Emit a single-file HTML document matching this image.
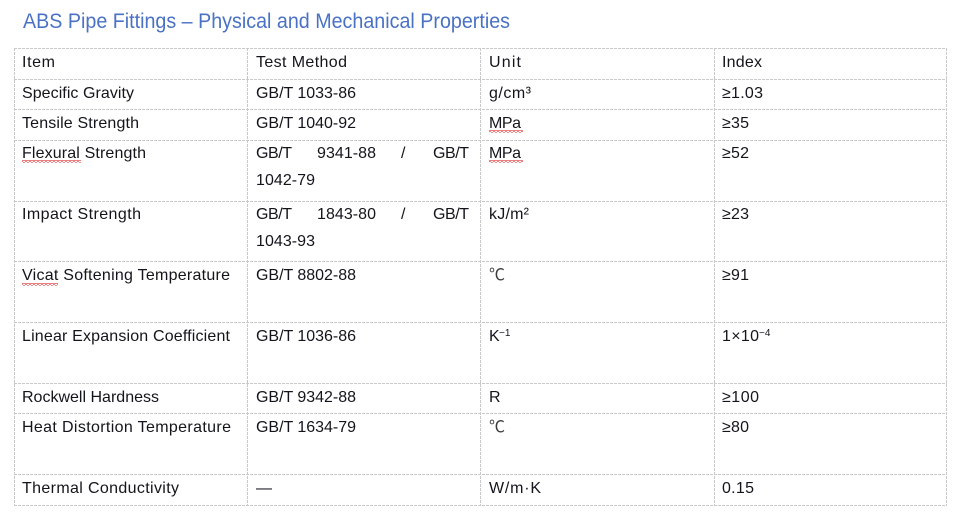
<!DOCTYPE html>
<html lang="en">
<head>
<meta charset="utf-8">
<title>ABS Pipe Fittings</title>
<style>
html,body{margin:0;padding:0;background:#fff;width:964px;height:518px;overflow:hidden}
svg{display:block}
text{font-family:"Liberation Sans",sans-serif;font-size:16px;fill:#14141c}
.t{font-size:21.500px;fill:#4a72c4}
.c{font-family:"Noto Sans CJK JP",sans-serif;font-size:16px;fill:#3c3c3c}
.u{font-size:10px}
.g{stroke:#c9c9c9;stroke-width:1;stroke-dasharray:3 1;fill:none}
</style>
</head>
<body>
<svg width="964" height="518" viewBox="0 0 964 518" xmlns="http://www.w3.org/2000/svg">
<defs>
<pattern id="w" x="0" y="0" width="4" height="3" patternUnits="userSpaceOnUse">
<path d="M0 .5L2 2.500L4 .5" fill="none" stroke="#e24a4a" stroke-width="1"/>
</pattern>
</defs>
<text class="t" x="23" y="28" textLength="487" lengthAdjust="spacingAndGlyphs">ABS Pipe Fittings – Physical and Mechanical Properties</text>

<path class="g" d="M14 48.500H947M14 79.500H947M14 109.500H947M14 140.500H947M14 201.500H947M14 261.500H947M14 322.500H947M14 383.500H947M14 413.500H947M14 474.500H947M14 505.500H947"/>
<path class="g" d="M14.500 48V506M247.500 48V506M480.500 48V506M714.500 48V506M946.500 48V506"/>

<text x="22" y="67" textLength="33">Item</text>
<text x="256" y="67" textLength="91">Test Method</text>
<text x="489" y="67" textLength="32">Unit</text>
<text x="722" y="67" textLength="40">Index</text>

<text x="22" y="98" textLength="112">Specific Gravity</text>
<text x="256" y="98" textLength="100">GB/T 1033-86</text>
<text x="489" y="98" textLength="42">g/cm³</text>
<text x="722" y="98" textLength="41">≥1.03</text>

<text x="22" y="128" textLength="117">Tensile Strength</text>
<text x="256" y="128" textLength="100">GB/T 1040-92</text>
<text x="489" y="128" textLength="32">MPa</text>
<text x="722" y="128" textLength="27">≥35</text>

<text x="22" y="158" textLength="124">Flexural Strength</text>
<text x="256" y="158" textLength="36">GB/T</text>
<text x="317" y="158" textLength="59">9341-88</text>
<text x="401" y="158">/</text>
<text x="433" y="158" textLength="36">GB/T</text>
<text x="256" y="185" textLength="59">1042-79</text>
<text x="489" y="158" textLength="32">MPa</text>
<text x="722" y="158" textLength="27">≥52</text>

<text x="22" y="219" textLength="119">Impact Strength</text>
<text x="256" y="219" textLength="36">GB/T</text>
<text x="317" y="219" textLength="59">1843-80</text>
<text x="401" y="219">/</text>
<text x="433" y="219" textLength="36">GB/T</text>
<text x="256" y="246" textLength="59">1043-93</text>
<text x="489" y="219" textLength="40">kJ/m²</text>
<text x="722" y="219" textLength="27">≥23</text>

<text x="22" y="280" textLength="208">Vicat Softening Temperature</text>
<text x="256" y="280" textLength="100">GB/T 8802-88</text>
<text class="c" x="489" y="280">℃</text>
<text x="722" y="280" textLength="27">≥91</text>

<text x="22" y="341" textLength="208">Linear Expansion Coefficient</text>
<text x="256" y="341" textLength="100">GB/T 1036-86</text>
<text x="489" y="341">K</text>
<text class="u" x="499" y="336">−1</text>
<text x="722" y="341" textLength="37">1×10</text>
<text class="u" x="759" y="336">−4</text>

<text x="22" y="402" textLength="137">Rockwell Hardness</text>
<text x="256" y="402" textLength="100">GB/T 9342-88</text>
<text x="489" y="402">R</text>
<text x="722" y="402" textLength="37">≥100</text>

<text x="22" y="432" textLength="209">Heat Distortion Temperature</text>
<text x="256" y="432" textLength="100">GB/T 1634-79</text>
<text class="c" x="489" y="432">℃</text>
<text x="722" y="432" textLength="27">≥80</text>

<text x="22" y="493" textLength="157">Thermal Conductivity</text>
<text x="256" y="493" textLength="16">—</text>
<text x="489" y="493" textLength="52">W/m·K</text>
<text x="722" y="493" textLength="32">0.15</text>

<rect x="489" y="130" width="34" height="3" fill="url(#w)"/>
<rect x="489" y="160" width="34" height="3" fill="url(#w)"/>
<rect x="22" y="160" width="59" height="3" fill="url(#w)"/>
<rect x="22" y="283" width="36" height="3" fill="url(#w)"/>
</svg>
</body>
</html>
